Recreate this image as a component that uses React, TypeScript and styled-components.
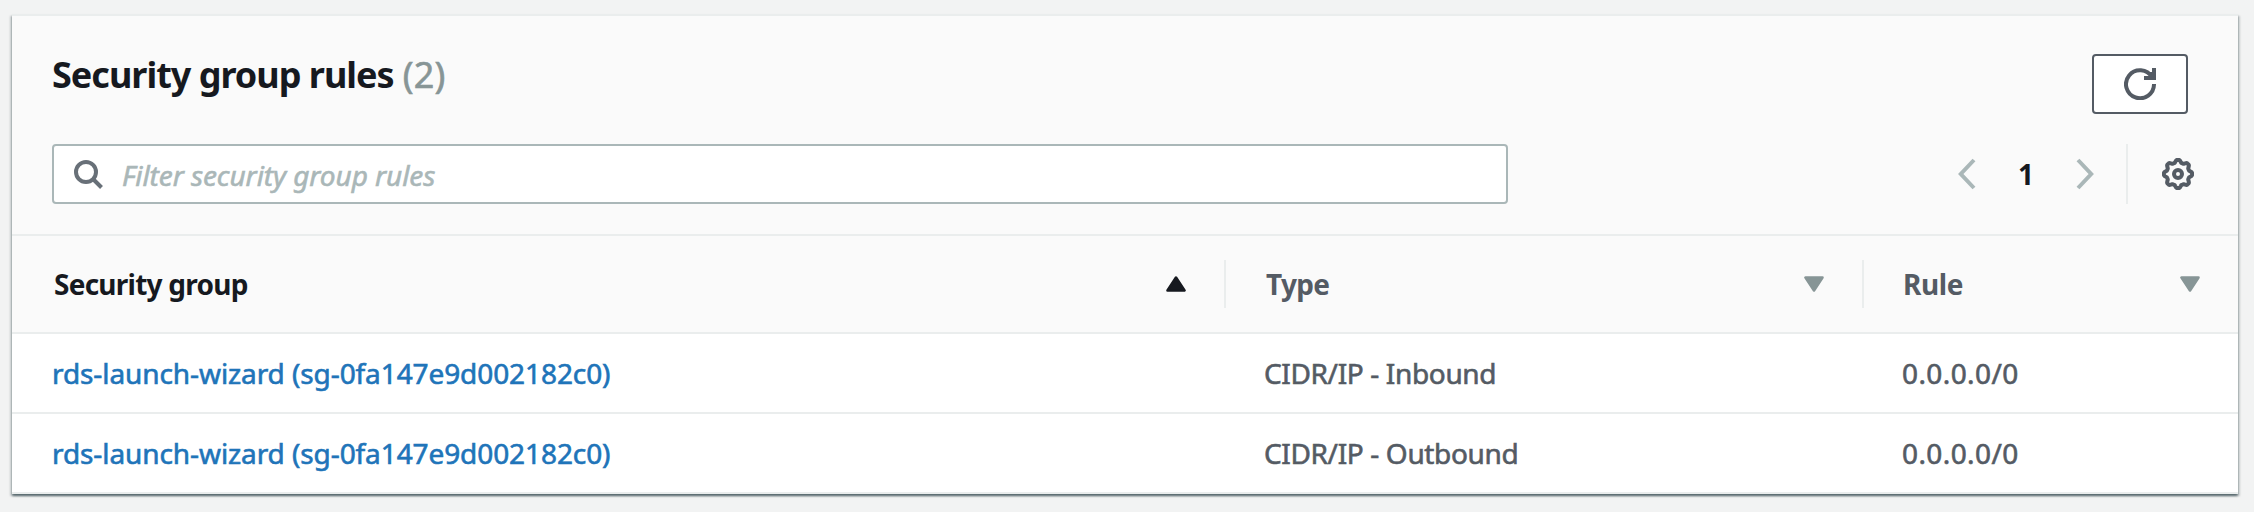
import React from 'react';
import styled, { createGlobalStyle } from 'styled-components';

const GlobalStyle = createGlobalStyle`
  * { box-sizing: border-box; }
  body {
    margin: 0;
    min-height: 512px;
    background: #f2f3f3;
    font-family: 'Noto Sans', 'Open Sans', sans-serif;
    font-size: 28px;
    line-height: 44px;
    color: #545b64;
  }
`;

const Page = styled.main`
  padding: 14px 16px 18px 12px;
`;

const Card = styled.section`
  height: 480px;
  background: #fff;
  border-top: 2px solid #eaeded;
  box-shadow: 0 2px 2px 0 rgba(0, 28, 36, 0.5), 2px 2px 2px 0 rgba(0, 28, 36, 0.15),
    -2px 2px 2px 0 rgba(0, 28, 36, 0.15);
`;

const Header = styled.header`
  height: 220px;
  padding: 38px 40px 0;
  background: #fafafa;
  border-bottom: 2px solid #eaeded;
`;

const TitleRow = styled.div`
  display: flex;
  justify-content: space-between;
  height: 90px;
  padding-right: 10px;
`;

const Title = styled.h2`
  display: flex;
  gap: 9px;
  margin: 0;
  font-size: 36px;
  line-height: 42px;
  font-weight: 700;
  letter-spacing: -1px;
  color: #16191f;
`;

const Counter = styled.span`
  font-weight: 400;
  letter-spacing: 0.2px;
  color: #879596;
  -webkit-text-stroke: 0.6px #879596;
`;

const RefreshButton = styled.button`
  display: flex;
  align-items: center;
  justify-content: center;
  width: 96px;
  height: 60px;
  padding: 0;
  background: #fff;
  border: 2px solid #545b64;
  border-radius: 4px;
`;

const Toolbar = styled.div`
  display: flex;
  justify-content: space-between;
  height: 60px;
`;

const SearchBox = styled.label`
  display: flex;
  align-items: center;
  gap: 16px;
  width: 1456px;
  padding-left: 20px;
  background: #fff;
  border: 2px solid #aab7b8;
  border-radius: 4px;
`;

const SearchInput = styled.input`
  flex: 1;
  height: 56px;
  padding: 2px 0 0;
  border: 0;
  outline: 0;
  background: transparent;
  font: inherit;
  letter-spacing: -0.08px;
  &::placeholder {
    color: #aab7b8;
    opacity: 1;
    font-style: italic;
    -webkit-text-stroke: 0.6px #aab7b8;
  }
`;

const Controls = styled.nav`
  display: flex;
  align-items: center;
`;

const PageNumber = styled.span`
  width: 100px;
  text-align: center;
  font-weight: 700;
  color: #16191f;
`;

const Settings = styled.div`
  display: flex;
  align-items: center;
  height: 60px;
  margin-left: 32px;
  padding: 0 4px 0 34px;
  border-left: 2px solid #eaeded;
`;

const columns = '1214px 638px 1fr';

const HeadRow = styled.div`
  display: grid;
  grid-template-columns: ${columns};
  align-items: center;
  height: 98px;
  background: #fafafa;
  border-bottom: 2px solid #eaeded;
`;

const HeadCell = styled.div<{ $left: number; $active?: boolean; $last?: boolean; $tracking?: number }>`
  display: flex;
  align-items: center;
  justify-content: space-between;
  height: 48px;
  padding: 0 38px 0 ${p => p.$left}px;
  border-right: ${p => (p.$last ? '0' : '2px solid #eaeded')};
  font-weight: 700;
  letter-spacing: ${p => p.$tracking ?? 0}px;
  color: ${p => (p.$active ? '#16191f' : '#545b64')};
`;

const HeadLabel = styled.span`
  padding-bottom: 1px;
`;

const Row = styled.div`
  display: grid;
  grid-template-columns: ${columns};
  align-items: center;
  height: 80px;
  border-bottom: 2px solid #eaeded;
`;

const Cell = styled.div<{ $left: number; $tracking?: number }>`
  padding-left: ${p => p.$left}px;
  letter-spacing: ${p => p.$tracking ?? 0}px;
  -webkit-text-stroke: 0.6px currentColor;
`;

const GroupLink = styled.a`
  color: #2074b9;
  text-decoration: none;
`;

const SearchIcon = () => (
  <svg width="32" height="32" viewBox="0 -2 32 32" fill="none" stroke="#687078" strokeWidth="4">
    <circle cx="12" cy="12" r="10" />
    <path d="M18.5 18.5l9 9" />
  </svg>
);

const RefreshIcon = () => (
  <svg width="32" height="32" viewBox="0 0 32 32" fill="none" stroke="#545b64" strokeWidth="4">
    <path d="M20 10h10V0" />
    <path d="M30 16A14 14 0 1 1 28 9" />
    <path d="M23 4h7v6h-4z" fill="#545b64" stroke="none" />
  </svg>
);

const Chevron = ({ d }: { d: string }) => (
  <svg width="18" height="32" viewBox="0 0 18 32" fill="none" stroke="#aab7b8" strokeWidth="4">
    <path d={d} />
  </svg>
);

const gearPath = (() => {
  const points: string[] = [];
  for (let i = 0; i <= 160; i++) {
    const a = (i / 160) * Math.PI * 2;
    const wave = 1.3 * Math.max(-1, Math.min(1, Math.cos(a * 8) * 1.4));
    const r = 12.8 + wave;
    points.push(`${(16 + r * Math.cos(a)).toFixed(2)} ${(16 + r * Math.sin(a)).toFixed(2)}`);
  }
  return `M${points.join('L')}Z`;
})();

const GearIcon = () => (
  <svg width="32" height="32" viewBox="0 0 32 32" fill="none" stroke="#545b64" strokeWidth="4">
    <path d={gearPath} strokeLinejoin="round" />
    <circle cx="16" cy="16" r="4" />
  </svg>
);

const SortIcon = ({ up }: { up?: boolean }) => (
  <svg width="20" height="16" viewBox="0 0 20 16">
    <path
      d={up ? 'M10 1.5L18.5 14.5H1.5Z' : 'M1.5 1.5H18.5L10 14.5Z'}
      fill={up ? '#16191f' : '#879596'}
      stroke={up ? '#16191f' : '#879596'}
      strokeWidth="2.6"
      strokeLinejoin="round"
    />
  </svg>
);

const rules = [
  { group: 'rds-launch-wizard (sg-0fa147e9d002182c0)', type: 'CIDR/IP - Inbound', rule: '0.0.0.0/0' },
  { group: 'rds-launch-wizard (sg-0fa147e9d002182c0)', type: 'CIDR/IP - Outbound', rule: '0.0.0.0/0' },
];

export default function App() {
  return (
    <Page>
      <GlobalStyle />
      <Card>
        <Header>
          <TitleRow>
            <Title>
              Security group rules <Counter>(2)</Counter>
            </Title>
            <RefreshButton aria-label="Refresh">
              <RefreshIcon />
            </RefreshButton>
          </TitleRow>
          <Toolbar>
            <SearchBox>
              <SearchIcon />
              <SearchInput placeholder="Filter security group rules" />
            </SearchBox>
            <Controls>
              <Chevron d="M16 2L2.8 16L16 30" />
              <PageNumber>1</PageNumber>
              <Chevron d="M2 2L15.2 16L2 30" />
              <Settings>
                <GearIcon />
              </Settings>
            </Controls>
          </Toolbar>
        </Header>
        <HeadRow>
          <HeadCell $left={42} $active $tracking={-0.75}>
            <HeadLabel>Security group</HeadLabel>
            <SortIcon up />
          </HeadCell>
          <HeadCell $left={40} $tracking={-0.7}>
            <HeadLabel>Type</HeadLabel>
            <SortIcon />
          </HeadCell>
          <HeadCell $left={39} $last $tracking={-0.4}>
            <HeadLabel>Rule</HeadLabel>
            <SortIcon />
          </HeadCell>
        </HeadRow>
        {rules.map(r => (
          <Row key={r.type}>
            <Cell $left={40} $tracking={-0.09}>
              <GroupLink>{r.group}</GroupLink>
            </Cell>
            <Cell $left={38} $tracking={-0.36}>{r.type}</Cell>
            <Cell $left={38} $tracking={0.4}>{r.rule}</Cell>
          </Row>
        ))}
      </Card>
    </Page>
  );
}
